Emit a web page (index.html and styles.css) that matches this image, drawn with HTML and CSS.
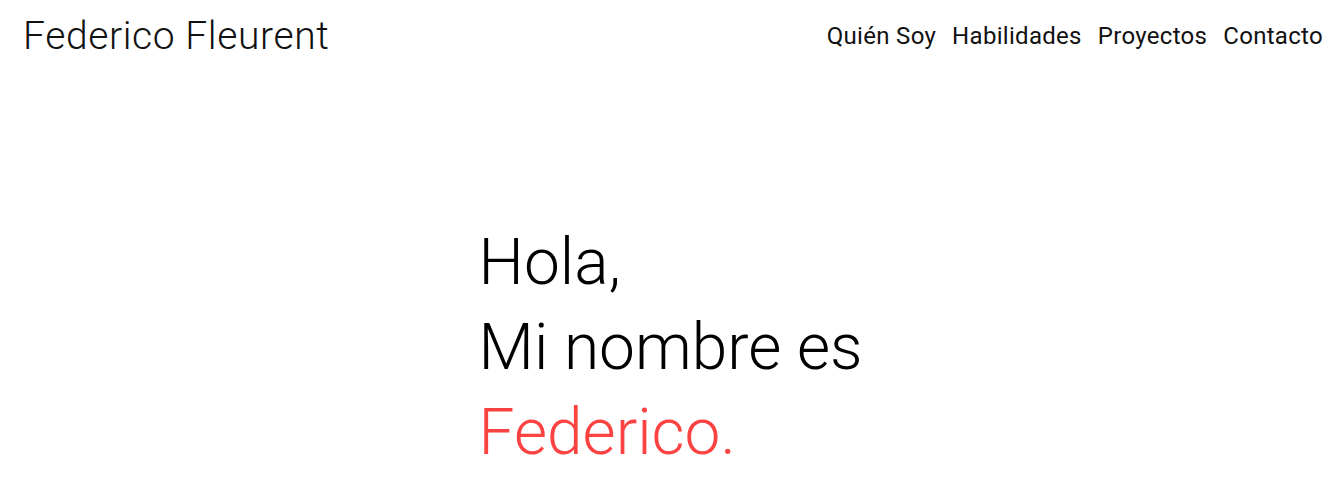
FILE: index.html
```html
<!DOCTYPE html>
<html lang="es">
<head>
<meta charset="utf-8">
<title>Federico Fleurent</title>
<link rel="stylesheet" href="styles.css">
</head>
<body>
<header class="header">
  <a class="logo" href="#">Federico Fleurent</a>
  <nav class="nav">
    <a href="#">Quién Soy</a>
    <a href="#">Habilidades</a>
    <a href="#">Proyectos</a>
    <a href="#">Contacto</a>
  </nav>
</header>
<main class="hero">
  <h1 class="hero-text">
    <span class="line">Hola,</span>
    <span class="line">Mi nombre es</span>
    <span class="line accent">Federico.</span>
  </h1>
</main>
</body>
</html>
```
FILE: styles.css
```css
* { box-sizing: border-box; }
html, body { margin: 0; padding: 0; background: #fff; }
body {
  font-family: "Roboto", "Liberation Sans", sans-serif;
  color: #111;
}
a { color: inherit; text-decoration: none; }
.header {
  display: flex;
  justify-content: space-between;
  align-items: center;
  padding: 2px 18px 0 23px;
  height: 70px;
}
.logo {
  font-size: 39px;
  font-weight: 300;
  letter-spacing: 0.6px;
}
.nav {
  display: flex;
  gap: 16px;
  font-size: 24px;
  font-weight: 400;
  letter-spacing: 0.3px;
}
.hero {
  display: flex;
  justify-content: center;
  padding-top: 150px;
}
.hero-text {
  margin: 0;
  font-size: 64px;
  font-weight: 300;
  line-height: 85px;
  color: #000;
}
.line { display: block; }
.accent { color: #fd4242; }
```
